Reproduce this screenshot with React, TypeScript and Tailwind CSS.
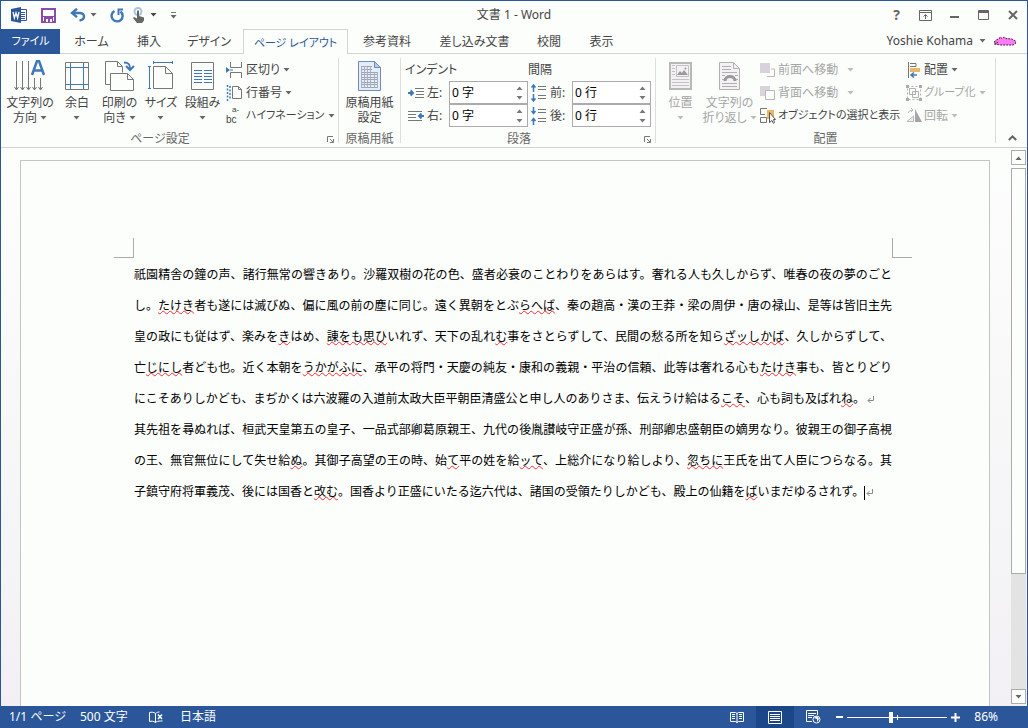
import { Fragment, type ReactNode } from 'react';
import clsx from 'clsx';

const UI_FONT = "font-['Noto_Sans','Noto_Sans_CJK_JP',sans-serif]";

const TABS = [
  { label: 'ホーム', width: 'w-[63px]' },
  { label: '挿入', width: 'w-[52px]' },
  { label: 'デザイン', width: 'w-[68px]' },
  { label: 'ページ レイアウト', width: 'w-[105px]', active: true },
  { label: '参考資料', width: 'w-[78px]' },
  { label: '差し込み文書', width: 'w-[97px]' },
  { label: '校閲', width: 'w-[52px]' },
  { label: '表示', width: 'w-[53px]' },
];

// Words in [brackets] are flagged by the spell checker
const PARAGRAPHS = [
  [
    '祇園精舎の鐘の声、諸行無常の響きあり。沙羅双樹の花の色、盛者必衰のことわりをあらはす。奢れる人も久しからず、唯春の夜の夢のごと',
    'し。[たけき]者も遂には滅びぬ、偏に風の前の塵に同じ。遠く異朝をとぶ[らへば]、秦の趙高・漢の王莽・梁の周伊・唐の禄山、是等は皆旧主先',
    '皇の政にも従はず、楽みを[き]はめ、[諌をも思ひ]いれず、天下の乱れ[む]事をさとらずして、民間の愁る所を知ら[ざッしかば]、久しからずして、',
    '亡[じにし]者ども也。近く本朝を[うかがふに]、承平の将門・天慶の純友・康和の義親・平治の信頼、此等は奢れる心も[たけき]事も、皆とりどり',
    'にこそありしかども、まぢかくは六波羅の入道前太政大臣平朝臣清盛公と申し人のありさま、伝えうけ給はる[こそ]、心も詞も及ばれ[ね]。',
  ],
  [
    '其先祖を尋ぬれば、桓武天皇第五の皇子、一品式部卿葛原親王、九代の後胤讃岐守正盛が孫、刑部卿忠盛朝臣の嫡男なり。彼親王の御子高視',
    'の王、無官無位にして失せ給[ぬ]。其御子高望の王の時、始[て]平の姓を給[ッて]、上総介になり給しより、[忽ちに]王氏を出て人臣につらなる。其',
    '子鎮守府将軍義茂、後には国香と[改む]。国香より正盛にいたる迄六代は、諸国の受領たりしかども、殿上の仙籍を[ば]いまだゆるされず。',
  ],
];

function Caret({ className = 'text-[#666]' }: { className?: string }) {
  return (
    <svg width="7" height="4" viewBox="0 0 7 4" className={clsx('shrink-0', className)} aria-hidden>
      <path d="M0.5 0h6L3.5 3.5z" fill="currentColor" />
    </svg>
  );
}

function Icon({ w = 16, h = 16, children }: { w?: number; h?: number; children: ReactNode }) {
  return (
    <svg width={w} height={h} viewBox={`0 0 ${w} ${h}`} fill="none" stroke="#777" className="shrink-0" aria-hidden>
      {children}
    </svg>
  );
}

/* ---------- title bar ---------- */

function TitleBar() {
  return (
    <header className="grid h-7 grid-cols-[1fr_auto_1fr] items-center">
      <div className="flex items-center pl-[10px]">
        <Icon w={17} h={16}>
          <path d="M9 2.5h6.500v11H9" fill="#fff" stroke="#2b579a" />
          <path d="M10 5.5h4M10 7.5h4M10 9.5h4M10 11.5h4" stroke="#2b579a" />
          <path d="M0 2 10 0v16L0 14z" fill="#2b579a" stroke="none" />
          <path d="m2 5 1.4 6L5 6l1.6 5L8 5" stroke="#fff" strokeWidth="1.3" />
        </Icon>
        <button aria-label="上書き保存" className="ml-[13px]">
          <Icon w={15} h={15}>
            <path d="M1 1h13v13H1z" stroke="#8b4bab" strokeWidth="2" />
            <path d="M3 2h9v5H3z" fill="#fff" stroke="none" />
            <path d="M2 8h11v1H2zM3 9h9v5H3z" fill="#8b4bab" stroke="none" />
            <path d="M5 11h2v3H5zM9 11h2v3H9z" fill="#fff" stroke="none" />
          </Icon>
        </button>
        <button aria-label="元に戻す" className="ml-[14px] flex items-center gap-1">
          <Icon w={16} h={14}>
            <path d="M3 5h6.500c3 0 4.500 1.500 4.500 3.500S12.500 12 9.500 12.500" stroke="#3f78b8" strokeWidth="2.400" />
            <path d="M7 .8 2 5l5 4.200" stroke="#3f78b8" strokeWidth="2.400" />
          </Icon>
          <Caret />
        </button>
        <button aria-label="やり直し" className="ml-[13px]">
          <Icon w={14} h={15}>
            <path d="M4.500 3A5.500 5.500 0 1 0 10.500 3.500" stroke="#3f78b8" strokeWidth="2.400" />
            <path d="M7.500 1.500h5.500M8.500 1v6" stroke="#3f78b8" strokeWidth="2" />
          </Icon>
        </button>
        <button aria-label="タッチ/マウス モードの切り替え" className="ml-2 flex items-center gap-1">
          <Icon w={14} h={16}>
            <circle cx="6" cy="4.500" r="3.500" stroke="#a9c3e0" strokeWidth="2" />
            <path d="M5 4q1-1.500 2 0v5l5 1.500v3L10 16H5l-4-5 1-1 3 1.500z" fill="#666" stroke="none" />
          </Icon>
          <Caret className="text-[#444]" />
        </button>
        <button aria-label="クイック アクセス ツール バーのユーザー設定" className="ml-[13px]">
          <Icon w={7} h={7}>
            <path d="M1 .5h5" />
            <path d="M.5 3h6l-3 3.500z" fill="#666" stroke="none" />
          </Icon>
        </button>
      </div>
      <h1 className="text-xs text-[#444]">文書 1 - Word</h1>
      <div className="flex justify-end">
        <button className="w-[29px] text-sm leading-5 font-bold text-[#666]" aria-label="ヘルプ">?</button>
        <button aria-label="リボンの表示オプション" className="flex w-[29px] items-center justify-center">
          <Icon w={13} h={11}>
            <path d="M.5.5h12v10H.5zM1 2.500h11M6.500 9V5" stroke="#666" />
            <path d="M4.500 6.500 6.500 4.500l2 2" stroke="#666" />
          </Icon>
        </button>
        <button aria-label="最小化" className="flex w-[29px] items-center justify-center">
          <Icon w={9} h={8}><path d="M0 6h9" stroke="#666" strokeWidth="2" /></Icon>
        </button>
        <button aria-label="最大化" className="flex w-[29px] items-center justify-center">
          <Icon w={11} h={10}><path d="M.5.5h10v9H.5zM0 1.500h11M0 2.500h11" stroke="#666" /></Icon>
        </button>
        <button aria-label="閉じる" className="flex w-[29px] items-center justify-center">
          <Icon w={10} h={10}><path d="m1 1 8 8m0-8-8 8" stroke="#666" strokeWidth="2" /></Icon>
        </button>
      </div>
    </header>
  );
}

function TabBar() {
  return (
    <nav className="flex h-[25px] text-xs text-[#444]">
      <button className="w-[59px] bg-[#2b579a] text-[11px] text-white">ファイル</button>
      {TABS.map((tab) => (
        <button
          key={tab.label}
          className={clsx(
            'pt-[2px] whitespace-nowrap',
            tab.width,
            tab.active
              ? 'border border-b-0 border-[#d2d4d2] text-[11px] text-[#2b579a]'
              : 'border-b border-[#d2d4d2]',
          )}
        >
          {tab.label}
        </button>
      ))}
      <div className="flex flex-1 justify-end border-b border-[#d2d4d2] pr-[10px]">
        <button className="flex items-center gap-[6px] whitespace-nowrap">
          Yoshie Kohama
          <Caret />
          <svg width="24" height="10" viewBox="0 0 24 10" className="ml-px" aria-hidden>
            <path
              d="M1 6 4 3.500 6 3l1-2 2 1.500L11 1l2 1.500 6 .5 3.500 2v2.500L20 9H8L4 8.500 1 8l4-1.500z"
              fill="#fb7bf3"
              stroke="#5a1a56"
              strokeDasharray="2 1"
            />
          </svg>
        </button>
      </div>
    </nav>
  );
}

/* ---------- ribbon ---------- */

function Group({ label, launcher, className, children }: {
  label: string;
  launcher?: boolean;
  className?: string;
  children: ReactNode;
}) {
  return (
    <section className={clsx('relative my-1 flex flex-col border-r border-[#dcdedc]', className)}>
      <div className="flex h-[72px] shrink-0">{children}</div>
      <h2 className={clsx('text-center leading-[18px] text-[#666]', launcher && 'pr-[22px]')}>{label}</h2>
      {launcher && (
        <button aria-label={`${label}の詳細`} className="absolute right-1 bottom-0">
          <Icon w={7} h={7}>
            <path d="M.5 6V.5H6M3 3l3 3M6.500 3v3.500H3" />
          </Icon>
        </button>
      )}
    </section>
  );
}

function BigButton({ icon, lines, width, caret = true, disabled }: {
  icon: ReactNode;
  lines: string[];
  width: string;
  caret?: boolean;
  disabled?: boolean;
}) {
  return (
    <button
      disabled={disabled}
      className={clsx('flex shrink-0 flex-col items-center gap-[3px] pt-[2px]', width, disabled && 'text-[#a5a5a5]')}
    >
      {icon}
      <span className="flex flex-col items-center leading-[15px] whitespace-nowrap">
        <span>{lines[0]}</span>
        <span className="flex min-h-[15px] items-center gap-[3px]">
          {lines[1]}
          {caret && <Caret className={disabled ? 'text-[#bbb]' : 'text-[#666]'} />}
        </span>
      </span>
    </button>
  );
}

function SmallButton({ icon, label, caret = true, disabled, gap = 'gap-[3px]', size = 'text-xs' }: {
  icon: ReactNode;
  label: string;
  caret?: boolean;
  disabled?: boolean;
  gap?: string;
  size?: string;
}) {
  return (
    <button
      disabled={disabled}
      className={clsx('flex h-[23px] items-center whitespace-nowrap', gap, size, disabled && 'text-[#a5a5a5]')}
    >
      <span className="flex items-center gap-[2px]">
        {icon}
        {label}
      </span>
      {caret && <Caret className={disabled ? 'text-[#bbb]' : 'text-[#666]'} />}
    </button>
  );
}

function Spinner({ id, icon, label, value }: { id: string; icon: ReactNode; label: string; value: string }) {
  return (
    <div className="flex h-[23px] items-center">
      {icon}
      <label htmlFor={id} className="w-[25px] shrink-0 pl-[3px] whitespace-nowrap">{label}</label>
      <div className="flex h-[23px] w-[79px] shrink-0 border border-[#ababab] bg-white">
        <input id={id} defaultValue={value} className="w-0 flex-1 pl-[2px] text-black outline-none" />
        <div className="flex w-4 flex-col items-center justify-center gap-[6px]">
          <button aria-label="増やす" className="rotate-180"><Caret className="block text-[#777]" /></button>
          <button aria-label="減らす"><Caret className="block text-[#777]" /></button>
        </div>
      </div>
    </div>
  );
}

const BLUE = '#3f78b8';

function TextDirectionIcon() {
  return (
    <Icon w={32} h={32}>
      <path d="M2.500 1v28M8.500 1v28M14.500 1v28M20.500 18v11M26.500 18v11" />
      <path d="m.5 27 2 3 2-3M6.500 27l2 3 2-3M12.500 27l2 3 2-3M18.500 27l2 3 2-3M24.500 27l2 3 2-3" />
      <path d="m18 15 5-14h2l5 14M20 10.500h8" stroke={BLUE} strokeWidth="2.500" />
    </Icon>
  );
}

function MarginsIcon() {
  return (
    <Icon w={24} h={32}>
      <path d="M.5 2.500h23v27H.5z" />
      <path d="M5.500 3v26M18.500 3v26M1 7.500h22M1 24.500h22" stroke={BLUE} />
    </Icon>
  );
}

function OrientationIcon() {
  return (
    <Icon w={30} h={32}>
      <path d="M5 24.500H.5v-23h12l5 5v6M12.500 1.500v5h5" />
      <path d="M5.500 13.500h17l6 6v11h-23zM22.500 13.500v6h6" fill="#fcfefc" />
      <path d="M19 2.500c5 0 6 2 6 6M21 6l4 4 4-4" stroke={BLUE} strokeWidth="2" />
    </Icon>
  );
}

function SizeIcon() {
  return (
    <Icon w={26} h={32}>
      <path d="M5.500 6.500h12l7 7v15h-19zM17.500 6.500v7h7" />
      <path d="M5.500 2.500h19M5.500 1v3M24.500 1v3M1.500 6.500v22M0 6.500h3M0 28.500h3" stroke={BLUE} />
    </Icon>
  );
}

function ColumnsIcon() {
  return (
    <Icon w={24} h={32}>
      <path d="M.5 2.500h22v27H.5z" />
      <path
        d="M3 10.500h8M3 13.500h8M3 16.500h8M3 19.500h8M3 22.500h8M13 10.500h8M13 13.500h8M13 16.500h8M13 19.500h8M13 22.500h8"
        stroke={BLUE}
      />
    </Icon>
  );
}

function ManuscriptIcon() {
  return (
    <Icon w={24} h={32}>
      <path d="M.5 1.500h16l6 6v23H.5z" fill="#e4edf9" stroke="#6f8cb5" />
      <path d="M16.500 1.500v6h6z" fill="#b7cbe8" stroke="#6f8cb5" />
      <path
        d="M3 6.500h11M3 9.500h11M3 12.500h17M3 14.500h17M3 17.500h17M3 19.500h17M3 22.500h17M3 24.500h17M3 27.500h17"
        stroke="#9aa3b0"
      />
      <path d="M3.500 6v22M6.500 6v22M9.500 6v22M12.500 6v22M16.500 12v16M19.500 12v16" stroke="#a9b1bc" />
    </Icon>
  );
}

function IndentIcon({ flip }: { flip?: boolean }) {
  return flip ? (
    <Icon>
      <path d="M0 3.500h14M0 6.500h8M0 9.500h8M0 12.500h14" />
      <path d="M16 8h-5M13.500 5.500 11 8l2.500 2.500" stroke={BLUE} strokeWidth="2" />
    </Icon>
  ) : (
    <Icon>
      <path d="M7 3.500h9M8 6.500h8M8 9.500h8M7 12.500h9" />
      <path d="M0 8h5M2.500 5.500 5 8l-2.500 2.500" stroke={BLUE} strokeWidth="2" />
    </Icon>
  );
}

function SpacingIcon({ inward }: { inward?: boolean }) {
  return (
    <Icon w={16} h={18}>
      <path d="M7 2.500h8M7 5.500h8M7 11.500h8M7 14.500h8" />
      <path
        d={inward ? 'M2.500 0v6M.5 4l2 2.500 2-2.500M2.500 18v-6M.5 14l2-2.500 2 2.500' : 'M2.500 8V1M.5 3.500l2-2.500 2 2.500M2.500 10v7M.5 14.500l2 2.500 2-2.500'}
        stroke={BLUE}
        strokeWidth="1.500"
      />
    </Icon>
  );
}

function Ribbon() {
  return (
    <div className="flex h-[94px] shrink-0 border-b border-[#d2d4d2] text-xs text-[#444]">
      <Group label="ページ設定" launcher className="w-[338px] pl-[3px]">
        <BigButton icon={<TextDirectionIcon />} lines={['文字列の', '方向']} width="w-[52px]" />
        <BigButton icon={<MarginsIcon />} lines={['余白']} width="w-[42px]" />
        <BigButton icon={<OrientationIcon />} lines={['印刷の', '向き']} width="w-[43px]" />
        <BigButton icon={<SizeIcon />} lines={['サイズ']} width="w-[40px]" />
        <BigButton icon={<ColumnsIcon />} lines={['段組み']} width="w-[43px]" />
        <div className="flex flex-col items-start pl-[2px]">
          <SmallButton
            label="区切り"
            icon={
              <Icon w={18}>
                <path d="M4.500 0v5.500h11V0M4.500 16v-5.500h11V16" />
                <path d="M0 5v6l4-3z" fill={BLUE} stroke="none" />
                <path d="M4 8h3" stroke={BLUE} />
              </Icon>
            }
          />
          <SmallButton
            label="行番号"
            icon={
              <Icon w={18}>
                <path d="M6.500 1.500h6l3 3v9h-9zM12.500 1.500v3h3" />
                <path d="M1.500 0v16M4 1v14" stroke={BLUE} strokeWidth="1.500" strokeDasharray="2 1.500" />
              </Icon>
            }
          />
          <SmallButton
            label="ハイフネーション"
            size="text-[11px]"
            icon={
              <span className="flex w-[18px] flex-col font-['Liberation_Sans',sans-serif]" aria-hidden>
                <span className="pl-[6px] text-left text-[8px] leading-[9px]">a-</span>
                <span className="text-left text-[10px] leading-[12px]">bc</span>
              </span>
            }
          />
        </div>
      </Group>

      <Group label="原稿用紙" className="w-[62px]">
        <BigButton icon={<ManuscriptIcon />} lines={['原稿用紙', '設定']} width="w-[61px]" caret={false} />
      </Group>

      <Group label="段落" launcher className="w-[255px] pl-1">
        <div className="w-[123px]">
          <h3 className="leading-[23px]">インデント</h3>
          <div className="pl-[3px]">
            <Spinner id="indent-left" icon={<IndentIcon />} label="左:" value="0 字" />
            <Spinner id="indent-right" icon={<IndentIcon flip />} label="右:" value="0 字" />
          </div>
        </div>
        <div className="w-[123px]">
          <h3 className="leading-[23px]">間隔</h3>
          <div className="pl-[3px]">
            <Spinner id="space-before" icon={<SpacingIcon />} label="前:" value="0 行" />
            <Spinner id="space-after" icon={<SpacingIcon inward />} label="後:" value="0 行" />
          </div>
        </div>
      </Group>

      <Group label="配置" className="w-[340px]">
        <BigButton
          disabled
          width="w-[49px]"
          lines={['位置']}
          icon={
            <Icon w={24} h={32}>
              <path d="M1 3h21v26H1z" fill="#f3f1f4" stroke="#b8b8b8" strokeWidth="2" />
              <path d="M7.500 5.500h12v11h-12zM3 5.500h3M3 8.500h3M3 11.500h3M3 14.500h3M3 19.500h17M3 22.500h17M3 25.500h17" stroke="#c2c2c2" />
              <path d="m8 15 3-4 2 2 2-3 4 5z" fill="#999" stroke="none" />
              <circle cx="16.500" cy="8.500" r="1" fill="#999" stroke="none" />
            </Icon>
          }
        />
        <BigButton
          disabled
          width="w-[49px]"
          lines={['文字列の', '折り返し']}
          icon={
            <Icon w={22} h={32}>
              <path d="M.5 2.500h14l6 6v21H.5z" fill="#f3f1f4" stroke="#b0b0b0" />
              <path d="M14.500 2.500v6h6M3 6.500h9M3 9.500h9M3 12.500h15M3 15.500h3M16 15.500h3M3 19.500h2M17 19.500h2M3 23.500h15M3 26.500h15" stroke="#b0b0b0" />
              <path d="M6 21c0-6 10-6 10 0" stroke="#999" strokeWidth="3" />
            </Icon>
          }
        />
        <div className="flex w-[147px] flex-col items-start pl-[6px]">
          <SmallButton
            disabled
            gap="gap-[9px]"
            label="前面へ移動"
            icon={
              <Icon>
                <path d="M7 14.500h7.500V7H11" stroke="#b8b8b8" />
                <path d="M0 1h10v10H0z" fill="#d9d2dc" stroke="none" />
              </Icon>
            }
          />
          <SmallButton
            disabled
            gap="gap-[9px]"
            label="背面へ移動"
            icon={
              <Icon>
                <path d="M0 1h10v10H0z" fill="#d9d2dc" stroke="none" />
                <path d="M5.500 5.500h9v9h-9z" fill="#fcfefc" stroke="#b8b8b8" />
              </Icon>
            }
          />
          <SmallButton
            caret={false}
            size="text-[11px]"
            label="オブジェクトの選択と表示"
            icon={
              <Icon>
                <path d="M7 .5H.5v6H5M.5 9.500h6v5h-6z" />
                <path d="M7 2h7v9H7z" fill="#efb566" stroke="none" />
                <path d="M9.500 4.500v10l2.500-2 1.500 3 1-1-1-3h2z" fill="#fff" stroke="#555" />
              </Icon>
            }
          />
        </div>
        <div className="flex flex-col items-start pl-[5px]">
          <SmallButton
            label="配置"
            icon={
              <Icon>
                <path d="M2.500 0v16M4 1.500h6v3H4" />
                <path d="M4 6h10v4H4z" fill="#efb566" stroke="none" />
                <path d="M5 13h6M8 10.500 5 13l3 2.500" stroke={BLUE} strokeWidth="1.500" />
              </Icon>
            }
          />
          <SmallButton
            disabled
            size="text-[11px]"
            label="グループ化"
            icon={
              <Icon>
                <path d="M3.500 3.500h6v6h-6zM6.500 6.500h6v6h-6z" stroke="#b0b0b0" />
                <path d="M1.500 1.500h13v13h-13z" stroke="#b0b0b0" strokeDasharray="2 2" />
                <path d="M0 0h3v3H0zM13 0h3v3h-3zM0 13h3v3H0zM13 13h3v3h-3z" fill="#aaa" stroke="none" />
              </Icon>
            }
          />
          <SmallButton
            disabled
            label="回転"
            icon={
              <Icon>
                <path d="M9 1v13h7z" fill="#a5a5a5" stroke="none" />
                <path d="M7.500 8v5.500H1z" fill="#eee" stroke="#b8b8b8" />
                <path d="M2 5q1-3 5-3M5 0l2 2-2 2" stroke="#b8b8b8" />
              </Icon>
            }
          />
        </div>
      </Group>

      <button aria-label="リボンを折りたたむ" className="mb-1 ml-auto flex w-[29px] items-end justify-center pb-[2px]">
        <Icon w={9} h={6}><path d="m.8 5 3.700-3.500L8.200 5" strokeWidth="2" stroke="#666" /></Icon>
      </button>
    </div>
  );
}

/* ---------- document ---------- */

function ReturnMark() {
  return (
    <svg width="8" height="8" viewBox="0 0 8 8" fill="none" stroke="#888" className="ml-[2px] inline-block" aria-hidden>
      <path d="M6.500 0v4.500H1M3.500 2 1 4.500 3.500 7" />
    </svg>
  );
}

function Line({ text }: { text: string }) {
  return (
    <>
      {text.split(/[[\]]/).map((part, i) =>
        i % 2 ? (
          <span
            key={i}
            className="underline decoration-red-500 decoration-wavy decoration-1 underline-offset-0 [text-decoration-skip-ink:none]"
          >
            {part}
          </span>
        ) : (
          <Fragment key={i}>{part}</Fragment>
        ),
      )}
    </>
  );
}

function DocumentArea() {
  return (
    <main className="flex min-h-0 flex-1 bg-linear-to-b from-[#fcfefc] to-[#f2f0f4] pr-px pl-[19px]">
      <article className="mt-3 flex-1 overflow-hidden border border-b-0 border-[#c3c5c3] bg-[#fcfefc] pt-[77px]">
        <div className="flex justify-between pr-[77px] pl-[93px]">
          <span className="size-5 border-r border-b border-[#ababab]" />
          <span className="size-5 border-b border-l border-[#ababab]" />
        </div>
        <div className="pr-[97px] pl-[113px] font-['Noto_Sans_CJK_JP',sans-serif] text-xs leading-[31px] whitespace-nowrap text-black [font-feature-settings:normal]">
          {PARAGRAPHS.map((lines, p) => (
            <p key={p} className="text-justify">
              {lines.map((line, i) => {
                const last = i === lines.length - 1;
                return (
                  <span key={line} className={clsx('block', !last && '[text-align-last:justify]')}>
                    <Line text={line} />
                    {last && p === PARAGRAPHS.length - 1 && (
                      <span className="-mr-px inline-block h-[14px] w-px bg-black align-middle" />
                    )}
                    {last && <ReturnMark />}
                  </span>
                );
              })}
            </p>
          ))}
        </div>
      </article>
      <div className="ml-[21px] flex w-[15px] flex-col py-[2px]">
        <button aria-label="上へ" className="flex h-[15px] items-center justify-center border border-[#ababab] bg-[#fcfefc]">
          <Caret className="rotate-180 text-[#666]" />
        </button>
        <div className="mt-[3px] flex flex-1 flex-col bg-[#e3e3e3]">
          <div className="h-[78%] border border-[#ababab] bg-[#fcfefc]" />
        </div>
        <button aria-label="下へ" className="flex h-[15px] items-center justify-center border border-[#ababab] bg-[#fcfefc]">
          <Caret />
        </button>
      </div>
    </main>
  );
}

/* ---------- status bar ---------- */

function StatusBar() {
  return (
    <footer className="flex h-[22px] items-center bg-[#2b579a] pr-[29px] pl-2 text-xs text-white">
      <span className="w-[71px]">1/1 ページ</span>
      <span className="w-[69px]">500 文字</span>
      <button aria-label="文章校正" className="w-[31px]">
        <Icon w={15} h={13}>
          <path d="M6.500 11.500c-2-1.500-4-1.500-6-1v-9c2-.5 4-.5 6 1zM6.500 2.500c1-1 2.500-1.500 4-1.500M6.500 11.500c1-1 3-1.500 5-1.500h2" stroke="#fff" />
          <path d="m9 3.500 4 4.500m0-4.500L9 8" stroke="#fff" strokeWidth="1.500" />
        </Icon>
      </button>
      <span>日本語</span>
      <div className="ml-auto flex h-full items-center">
        <button aria-label="閲覧モード" className="flex h-full w-[38px] items-center justify-center">
          <Icon w={14} h={13}>
            <path d="M.5 1.500h5l1.500 1 1.500-1h5v9h-5L7 11.500l-1.500-1h-5zM7 2v10" stroke="#fff" />
            <path d="M2 3.500h3M2 5.500h3M2 7.500h3M9 3.500h3M9 5.500h3M9 7.500h3" stroke="#fff" />
          </Icon>
        </button>
        <button aria-label="印刷レイアウト" className="flex h-full w-[38px] items-center justify-center bg-[#1b4688]">
          <Icon w={14} h={13}>
            <path d="M.5.5h13v12H.5zM2 3.500h10M2 5.500h10M2 7.500h10M2 9.500h10" stroke="#fff" />
          </Icon>
        </button>
        <button aria-label="Web レイアウト" className="flex h-full w-[38px] items-center justify-center">
          <Icon w={15} h={14}>
            <path d="M6 11.500H.5V.5h11V5M2 3.500h8M2 5.500h6M2 7.500h4" stroke="#fff" />
            <circle cx="10.500" cy="9.500" r="3.500" stroke="#fff" fill="#2b579a" />
            <path d="m8 8 3 1v3l2-3-2-3z" fill="#fff" stroke="none" />
          </Icon>
        </button>
        <button aria-label="縮小" className="ml-1 w-[8px]">
          <Icon w={7} h={8}><path d="M0 4h7" stroke="#fff" strokeWidth="2" /></Icon>
        </button>
        <div className="relative mr-1 ml-[3px] flex h-[11px] w-[100px] items-center">
          <input
            type="range"
            aria-label="ズーム"
            min={0}
            max={200}
            defaultValue={86}
            className="h-[11px] w-full appearance-none bg-transparent [&::-webkit-slider-runnable-track]:h-px [&::-webkit-slider-runnable-track]:bg-white [&::-webkit-slider-thumb]:-mt-[5px] [&::-webkit-slider-thumb]:h-[11px] [&::-webkit-slider-thumb]:w-1 [&::-webkit-slider-thumb]:appearance-none [&::-webkit-slider-thumb]:bg-white"
          />
          <span className="absolute top-[3px] left-1/2 h-[5px] w-px bg-white" />
        </div>
        <button aria-label="拡大" className="w-[9px]">
          <Icon w={9} h={9}><path d="M0 4.500h9M4.500 0v9" stroke="#fff" strokeWidth="2" /></Icon>
        </button>
        <span className="ml-[14px]">86%</span>
      </div>
    </footer>
  );
}

export default function App() {
  return (
    <div
      className={clsx(
        "flex h-screen flex-col overflow-hidden border-x border-t border-[#2b579a] bg-[#fcfefc] [font-feature-settings:'palt']",
        UI_FONT,
      )}
      lang="ja"
    >
      <TitleBar />
      <TabBar />
      <Ribbon />
      <DocumentArea />
      <StatusBar />
    </div>
  );
}
